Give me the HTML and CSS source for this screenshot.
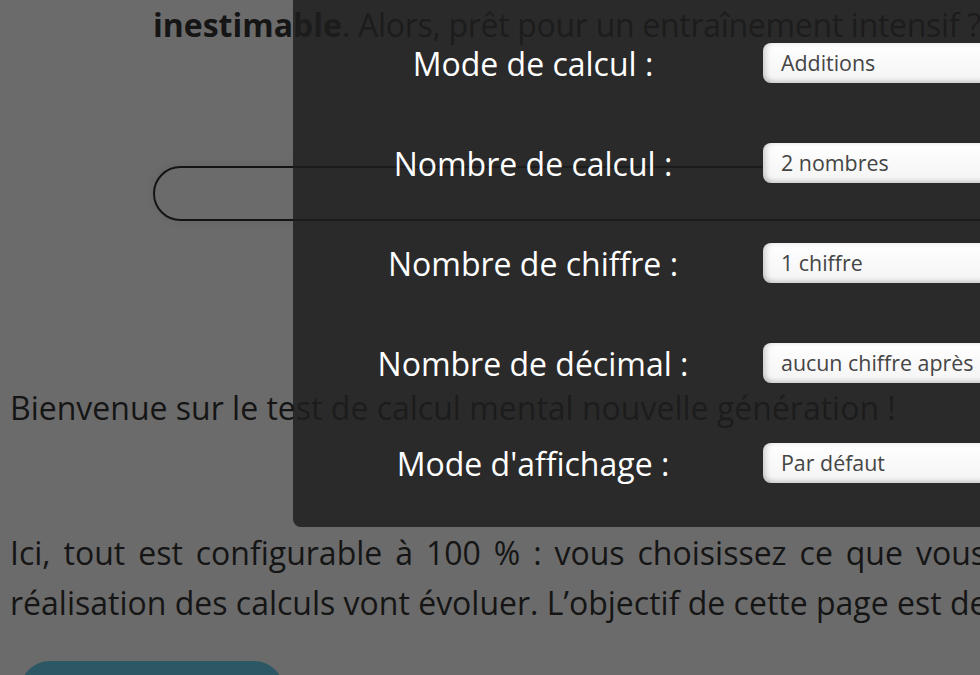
FILE: index.html
```html
<!DOCTYPE html>
<html lang="fr">
<head>
<meta charset="utf-8">
<title>Calcul mental</title>
<link rel="stylesheet" href="styles.css">
</head>
<body>
<main class="page">
  <p class="intro"><strong>inestimable</strong>. Alors, prêt pour un entraînement intensif ?</p>
  <div class="pill"></div>
  <p class="welcome">Bienvenue sur le test de calcul mental nouvelle génération !</p>
  <p class="desc">
    <span class="line justify">Ici, tout est configurable à 100 % : vous choisissez ce que vous</span>
    <span class="line">réalisation des calculs vont évoluer. L’objectif de cette page est de</span>
  </p>
  <div class="start-btn"></div>
</main>

<section class="panel">
  <div class="row">
    <label class="label">Mode de calcul :</label>
    <div class="select">Additions</div>
  </div>
  <div class="row">
    <label class="label">Nombre de calcul :</label>
    <div class="select">2 nombres</div>
  </div>
  <div class="row">
    <label class="label">Nombre de chiffre :</label>
    <div class="select">1 chiffre</div>
  </div>
  <div class="row">
    <label class="label">Nombre de décimal :</label>
    <div class="select">aucun chiffre après la virgule</div>
  </div>
  <div class="row">
    <label class="label">Mode d'affichage :</label>
    <div class="select">Par défaut</div>
  </div>
</section>
</body>
</html>
```

FILE: styles.css
```css
html, body {
  margin: 0;
  padding: 0;
}

body {
  width: 980px;
  height: 675px;
  overflow: hidden;
  position: relative;
  background: #6b6b6b;
  font-family: "Open Sans", "Noto Sans", sans-serif;
  color: #151515;
}

.page {
  font-size: 32px;
  line-height: 50px;
}

.page p {
  margin: 0;
}

.intro {
  padding-left: 153px;
  white-space: nowrap;
  letter-spacing: -0.3px;
}

.intro strong {
  font-weight: 700;
  letter-spacing: 0;
}

.pill {
  margin: 116px 0 0 153px;
  width: 1000px;
  height: 51px;
  border: 2px solid #141414;
  border-radius: 28px;
  box-shadow: 0 0 10px rgba(0, 0, 0, 0.08);
}

.welcome {
  margin-top: 162px !important;
  padding-left: 10px;
  white-space: nowrap;
}

.desc {
  margin-top: 95px !important;
  padding-left: 10px;
}

.line {
  display: block;
  white-space: nowrap;
}

.line.justify {
  width: 976px;
  white-space: normal;
  text-align: justify;
  text-align-last: justify;
}

.start-btn {
  margin: 33px 0 0 20px;
  width: 264px;
  height: 60px;
  border-radius: 30px;
  background: #2b5864;
}

.panel {
  position: absolute;
  top: 0;
  left: 293px;
  width: 760px;
  height: 527px;
  box-sizing: border-box;
  padding: 13px 0 14px 10px;
  background: rgba(30, 30, 30, 0.84);
  border-bottom-left-radius: 8px;
  display: grid;
  grid-template-columns: 460px 1fr;
  grid-auto-rows: 100px;
  align-items: center;
}

.row {
  display: contents;
}

.label {
  text-align: center;
  color: #ffffff;
  font-size: 32px;
  white-space: nowrap;
}

.select {
  height: 40px;
  line-height: 40px;
  box-sizing: border-box;
  padding-left: 18px;
  border-radius: 8px;
  background: linear-gradient(#ffffff, #f4f4f4);
  box-shadow: inset 4px 0 5px rgba(0, 0, 0, 0.12), inset 0 -3px 4px rgba(0, 0, 0, 0.10);
  color: #454545;
  font-size: 21.4px;
  white-space: nowrap;
  overflow: hidden;
}
```
